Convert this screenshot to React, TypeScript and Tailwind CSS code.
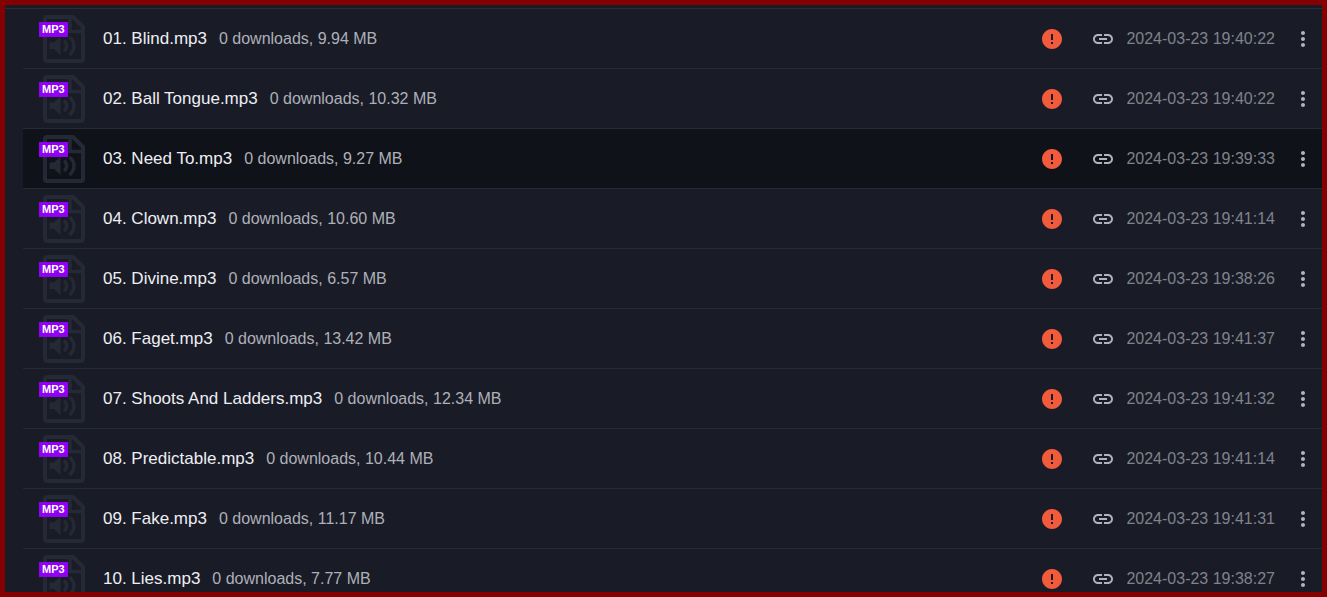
import { MdError, MdLink, MdMoreVert } from "react-icons/md";

type Track = {
  name: string;
  downloads: number;
  size: string;
  date: string;
  selected?: boolean;
};

const tracks: Track[] = [
  { name: "01. Blind.mp3", downloads: 0, size: "9.94 MB", date: "2024-03-23 19:40:22" },
  { name: "02. Ball Tongue.mp3", downloads: 0, size: "10.32 MB", date: "2024-03-23 19:40:22" },
  { name: "03. Need To.mp3", downloads: 0, size: "9.27 MB", date: "2024-03-23 19:39:33", selected: true },
  { name: "04. Clown.mp3", downloads: 0, size: "10.60 MB", date: "2024-03-23 19:41:14" },
  { name: "05. Divine.mp3", downloads: 0, size: "6.57 MB", date: "2024-03-23 19:38:26" },
  { name: "06. Faget.mp3", downloads: 0, size: "13.42 MB", date: "2024-03-23 19:41:37" },
  { name: "07. Shoots And Ladders.mp3", downloads: 0, size: "12.34 MB", date: "2024-03-23 19:41:32" },
  { name: "08. Predictable.mp3", downloads: 0, size: "10.44 MB", date: "2024-03-23 19:41:14" },
  { name: "09. Fake.mp3", downloads: 0, size: "11.17 MB", date: "2024-03-23 19:41:31" },
  { name: "10. Lies.mp3", downloads: 0, size: "7.77 MB", date: "2024-03-23 19:38:27" },
];

export default function App() {
  return (
    <main className="h-screen overflow-hidden border-[5px] border-[#850000] bg-[#191c26] font-['Liberation_Sans',Arial,sans-serif] text-base">
      <div className="border-b border-[#282d38] pt-[3px]" />
      <ul className="pl-[18px]">
        {tracks.map((track) => (
          <TrackRow key={track.name} track={track} />
        ))}
      </ul>
    </main>
  );
}

function TrackRow({ track }: { track: Track }) {
  return (
    <li
      className={`flex h-[60px] items-center border-b border-[#252a35] pr-[7px] pl-5 ${
        track.selected ? "bg-[#0f1218]" : ""
      }`}
    >
      <FileIcon />
      <div className="ml-[18px] flex min-w-0 flex-1 items-baseline gap-3 whitespace-nowrap">
        <a href="#" className="text-[17px] leading-6 text-[#eeeef4]">
          {track.name}
        </a>
        <span className="text-[#aeb0b9]">
          {track.downloads} downloads, {track.size}
        </span>
      </div>
      <div className="flex shrink-0 items-center">
        <MdError className="size-6 text-[#f15b3c]" role="img" aria-label="Warning" />
        <button type="button" aria-label="Copy link" className="ml-[27px] text-[#b0b3be]">
          <MdLink className="size-6" />
        </button>
        <time className="ml-[11px] whitespace-nowrap text-[#80828c]">{track.date}</time>
        <button type="button" aria-label="More actions" className="ml-4 text-[#b0b3be]">
          <MdMoreVert className="size-6" />
        </button>
      </div>
    </li>
  );
}

function FileIcon() {
  return (
    <div className="relative shrink-0">
      <svg viewBox="0 0 42 49" className="h-[49px] w-[42px] text-[#252936]" fill="none" stroke="currentColor" aria-hidden="true">
        <path d="M4 3h26l10 10v32a2 2 0 0 1-2 2H4a2 2 0 0 1-2-2V5a2 2 0 0 1 2-2Z" strokeWidth="4" strokeLinejoin="round" />
        <path d="M27 3v14.500h13" strokeWidth="3.500" />
        <path d="M6.500 28.500h4.500l6.500-6v18.500l-6.500-6H6.500Z" fill="currentColor" stroke="none" />
        <path d="M21 26.500c3.500 3 3.500 7.500 0 10.500M26.500 23c6 5 6 12.500 0 18" strokeWidth="3.500" />
      </svg>
      <span className="absolute top-2 -left-1 bg-[#9000f5] px-[3px] text-[11px] leading-[15px] font-bold text-white">
        MP3
      </span>
    </div>
  );
}
